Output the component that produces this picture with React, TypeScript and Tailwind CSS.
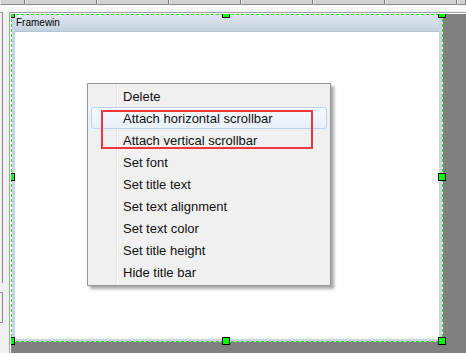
import React from "react";

const items = [
  "Delete",
  "Attach horizontal scrollbar",
  "Attach vertical scrollbar",
  "Set font",
  "Set title text",
  "Set text alignment",
  "Set text color",
  "Set title height",
  "Hide title bar",
];

function Handle({ cls }: { cls: string }) {
  return <div className={`absolute w-[8px] h-[8px] bg-[#00ff00] border border-black ${cls}`} />;
}

export default function App() {
  const btns = [25, 72, 72, 72, 72, 72, 72, 9];
  return (
    <div
      className="relative w-[466px] h-[353px] overflow-hidden flex flex-col bg-[#f0f0f0]"
      style={{ fontFamily: '"Liberation Sans", Arial, sans-serif' }}
    >
      {/* toolbar buttons */}
      <div className="flex h-[5px] shrink-0">
        {btns.map((w, i) => (
          <div
            key={i}
            style={{ width: w }}
            className="h-full shrink-0 bg-[#d2d2d2] border-r border-r-[#7c7c7c] border-b border-b-[#8a8a8a] border-l border-l-[#ececec]"
          />
        ))}
      </div>
      <div className="h-[7px] shrink-0 bg-[#fafafa]" />
      {/* body */}
      <div className="flex flex-1 min-h-0">
        {/* left strip */}
        <div className="w-[9px] shrink-0 flex flex-col bg-[#f0f0f0]">
          <div className="h-[1px] bg-[#a0a0a0] w-[3px]" />
          <div className="h-[270px] w-[3px] border-r border-r-[#8a8a8a]" />
          <div className="h-[9px]" />
          <div className="h-[31px] w-[3px] border-r border-t border-b border-[#8a8a8a]" />
        </div>
        {/* canvas wrapper */}
        <div className="flex-1 flex flex-col border-l border-t border-[#a0a0a0] bg-white pl-[1px] pt-[1px]">
          <div className="relative flex-1 bg-[#808080] overflow-hidden">
            {/* framewin */}
            <div className="absolute left-0 top-0 w-[432px] h-[328px] bg-white p-[1px]">
              <div className="w-full h-full bg-[#c9d5e1] flex flex-col px-[3px] pb-[2px]">
                <div className="h-[17px] shrink-0 bg-gradient-to-b from-[#dfe7f0] to-[#c4d2df] border-b border-b-[#b4c4d4] flex items-center pl-[1px] text-[10px] text-black leading-none">
                  Framewin
                </div>
                <div className="flex-1 bg-white" />
              </div>
            </div>
            {/* dashed selection lines */}
            <div className="absolute left-0 top-0 w-[432px] h-[1px] bg-[repeating-linear-gradient(90deg,#11ee11_0_3px,#ffffff_3px_5px)]" />
            <div className="absolute left-0 top-[327px] w-[432px] h-[1px] bg-[repeating-linear-gradient(90deg,#11ee11_0_3px,#ffffff_3px_5px)]" />
            <div className="absolute left-0 top-0 w-[1px] h-[328px] bg-[repeating-linear-gradient(180deg,#11ee11_0_3px,#ffffff_3px_5px)]" />
            <div className="absolute left-[431px] top-0 w-[1px] h-[328px] bg-[repeating-linear-gradient(180deg,#11ee11_0_3px,#ffffff_3px_5px)]" />
            {/* handles */}
            <Handle cls="left-[-4px] top-[-4px]" />
            <Handle cls="left-[211px] top-[-4px]" />
            <Handle cls="left-[427px] top-[-4px]" />
            <Handle cls="left-[-4px] top-[159px]" />
            <Handle cls="left-[427px] top-[159px]" />
            <Handle cls="left-[-4px] top-[323px]" />
            <Handle cls="left-[211px] top-[323px]" />
            <Handle cls="left-[427px] top-[323px]" />
          </div>
        </div>
      </div>

      {/* context menu */}
      <div className="absolute left-[87px] top-[83px] w-[244px] h-[203px] bg-[#f0f0f0] border border-[#979797] shadow-[3px_3px_3px_rgba(0,0,0,0.35)] py-[1px] px-[3px]">
        <div className="absolute left-[28px] top-[1px] bottom-[1px] w-[2px] flex">
          <div className="w-[1px] bg-[#e2e3e3]" />
          <div className="w-[1px] bg-white" />
        </div>
        <div className="relative flex flex-col">
          {items.map((t, i) => (
            <div
              key={t}
              className={`h-[22px] flex items-center pl-[31px] text-[13px] text-[#111] leading-none rounded-[3px] border ${
                i === 1
                  ? "border-[#b8d2ef] bg-gradient-to-b from-[#f5f9fe] to-[#e8f0fa]"
                  : "border-transparent"
              }`}
            >
              {t}
            </div>
          ))}
        </div>
      </div>

      {/* red annotation rectangle */}
      <div className="absolute left-[101px] top-[110px] w-[212px] h-[39px] border-2 border-[#f0363c]" />
    </div>
  );
}
